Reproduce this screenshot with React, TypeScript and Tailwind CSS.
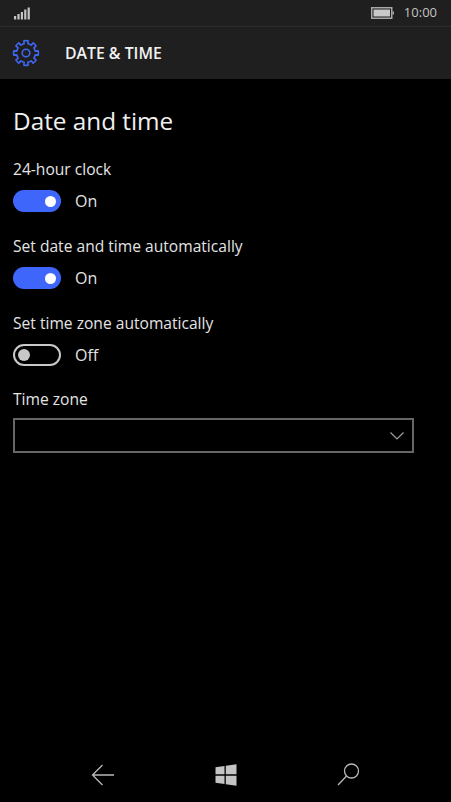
const font = { fontFamily: '"Open Sans", sans-serif' };

function SignalIcon() {
  return (
    <svg width="16" height="13" viewBox="0 0 16 13" fill="#c4c4c4">
      <rect x="0" y="9" width="2.2" height="3.5" />
      <rect x="3.4" y="7" width="2.2" height="5.5" />
      <rect x="6.8" y="5" width="2.2" height="7.5" />
      <rect x="10.2" y="2.5" width="2.2" height="10" />
      <rect x="13.6" y="0.5" width="2.2" height="12" />
    </svg>
  );
}

function BatteryIcon() {
  return (
    <svg width="23" height="12" viewBox="0 0 23 12">
      <rect x="0.75" y="0.75" width="20" height="10.5" fill="#1f1f1f" stroke="#a8a8a8" strokeWidth="1.5" />
      <rect x="2.5" y="2.5" width="16.5" height="7" fill="#c8c8c8" />
      <rect x="21.5" y="4.5" width="1.5" height="3" fill="#a8a8a8" />
    </svg>
  );
}

// eight rounded teeth around a ring
function gearPath(cx: number, cy: number, outer: number, inner: number) {
  let d = "";
  for (let i = 0; i < 8; i++) {
    const a = (i * Math.PI) / 4;
    const pt = (r: number, off: number) =>
      `${(cx + r * Math.cos(a + off)).toFixed(2)} ${(cy + r * Math.sin(a + off)).toFixed(2)}`;
    d += `${i === 0 ? "M" : "L"}${pt(inner, -0.2)} L${pt(outer, -0.17)} A${outer} ${outer} 0 0 1 ${pt(outer, 0.17)} L${pt(inner, 0.2)} `;
    const next = Math.PI / 4 - 0.2;
    d += `A${inner} ${inner} 0 0 1 ${pt(inner, next)} `;
  }
  return d + "Z";
}

function GearIcon() {
  return (
    <svg width="28" height="28" viewBox="0 0 28 28" fill="none" stroke="#3f66f4" strokeWidth="1.6" strokeLinejoin="round">
      <path d={gearPath(14, 14, 12.4, 9.4)} />
      <circle cx="14" cy="14" r="3.8" />
    </svg>
  );
}

function Toggle({ on }: { on: boolean }) {
  return (
    <div className="flex items-center gap-[14px]">
      {on ? (
        <div className="flex h-[22px] w-[48px] items-center justify-end rounded-full bg-[#3f66fb] pr-[5px]">
          <div className="h-[11px] w-[11px] rounded-full bg-white" />
        </div>
      ) : (
        <div className="flex h-[22px] w-[48px] items-center rounded-full border-2 border-[#c8c8c8] pl-[3px]">
          <div className="h-[12px] w-[12px] rounded-full bg-[#c8c8c8]" />
        </div>
      )}
      <span className="pt-[1px] text-[16px] leading-[21px] text-[#e4e4e4]">{on ? "On" : "Off"}</span>
    </div>
  );
}

function Setting({ label, on }: { label: string; on: boolean }) {
  return (
    <div className="flex flex-col gap-[10px]">
      <div className="text-[15.6px] leading-[22px] text-[#e4e4e4]">{label}</div>
      <Toggle on={on} />
    </div>
  );
}

export default function App() {
  return (
    <div className="flex h-[802px] w-[451px] flex-col overflow-hidden bg-black" style={font}>
      <div className="flex h-[27px] items-center justify-between border-b border-[#2c2c2c] bg-[#1f1f1f] px-[14px]">
        <SignalIcon />
        <div className="flex items-center gap-[10px]">
          <BatteryIcon />
          <span className="text-[13px] text-[#c4c4c4]">10:00</span>
        </div>
      </div>
      <div className="flex h-[52px] items-center gap-[25px] bg-[#1f1f1f] pl-[12px]">
        <GearIcon />
        <span className="pt-[1px] text-[15.8px] font-semibold text-[#f2f2f2]">DATE &amp; TIME</span>
      </div>
      <div className="flex flex-1 flex-col px-[13px] pt-[24px]">
        <h1 className="text-[24.3px] leading-[36px] text-[#f0f0f0]">Date and time</h1>
        <div className="mt-[19px] flex flex-col gap-[23px]">
          <Setting label="24-hour clock" on />
          <Setting label="Set date and time automatically" on />
          <Setting label="Set time zone automatically" on={false} />
        </div>
        <div className="mt-[22px] text-[15.6px] leading-[22px] text-[#e4e4e4]">Time zone</div>
        <div className="mt-[8px] flex h-[35px] w-[401px] items-center justify-end border-2 border-[#666] pr-[8px]">
          <svg width="14" height="8" viewBox="0 0 14 8" fill="none" stroke="#a0a0a0" strokeWidth="1.2">
            <path d="M0.5 0.5 7 7 13.5 0.5" />
          </svg>
        </div>
      </div>
      <div className="flex h-[52px] items-start justify-center pr-[1px] pt-[13px]">
        <div className="flex items-center gap-[100px]">
          <svg width="24" height="22" viewBox="0 0 24 22" fill="none" stroke="#b8b8b8" strokeWidth="1.3">
            <path d="M11.5 1 1.5 11l10 10M1.5 11H23" />
          </svg>
          <svg width="22" height="22" viewBox="0 0 22 22" fill="#c4c4c4">
            <path d="M0.5 3.2 9.5 2v8.2h-9zM10.8 1.8 21.5 0.3v9.9H10.8zM0.5 11.8h9v8.2l-9-1.2zM10.8 11.8h10.7v9.9L10.8 20.2z" />
          </svg>
          <svg width="23" height="23" viewBox="0 0 23 23" fill="none" stroke="#b8b8b8" strokeWidth="1.3">
            <circle cx="14.5" cy="8" r="7" />
            <path d="M9.5 13 1 22" />
          </svg>
        </div>
      </div>
    </div>
  );
}
